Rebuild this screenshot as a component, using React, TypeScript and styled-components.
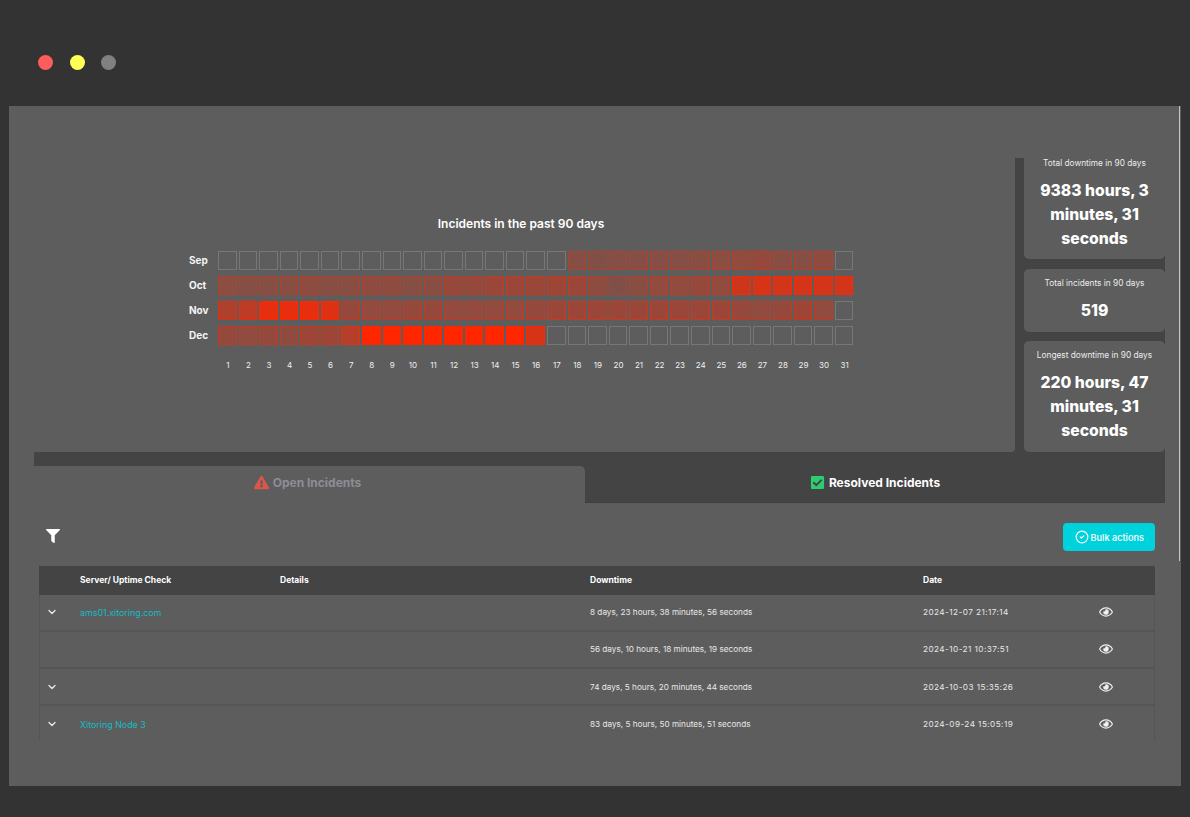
import React from 'react';
import styled, { createGlobalStyle } from 'styled-components';
import { FaCheckSquare, FaExclamationTriangle, FaFilter, FaRegEye } from 'react-icons/fa';
import { ChevronDown, CircleCheck } from 'lucide-react';

const GlobalStyle = createGlobalStyle`
  html, body {
    margin: 0;
    padding: 0;
    background: #333333;
    font-family: Inter, "Open Sans", sans-serif;
    color: #ffffff;
  }
  * { box-sizing: border-box; }
`;

const Page = styled.div`
  width: 1190px;
  height: 817px;
  overflow: hidden;
  background: #333333;
`;

const TitleBar = styled.div`
  height: 106px;
  padding: 18px 0 0 38px;
  display: flex;
  align-items: center;
  gap: 16.5px;
`;

const Dot = styled.span<{ $color: string }>`
  width: 15px;
  height: 15px;
  border-radius: 50%;
  background: ${p => p.$color};
`;

const Window = styled.div`
  position: relative;
  margin-left: 9px;
  width: 1172px;
  height: 680px;
  background: #5d5d5d;
  padding: 52px 16px 0 25px;

  &::after {
    content: '';
    position: absolute;
    top: 0;
    right: 1px;
    width: 1px;
    height: 455px;
    background: #c4c4c4;
  }
`;

const Overview = styled.section`
  display: flex;
  gap: 9px;
  height: 294px;
  background: #444444;
  overflow: hidden;
`;

const ChartPanel = styled.div`
  width: 981px;
  background: #5d5d5d;
  border-radius: 0 0 4px 0;
  padding: 57px 7px 0 0;
  display: flex;
  flex-direction: column;
  align-items: center;
`;

const ChartTitle = styled.h2`
  margin: 0 0 18px;
  font-size: 12px;
  line-height: 18px;
  font-weight: 600;
`;

const Heatmap = styled.div`
  width: 666px;
  display: grid;
  grid-template-columns: 28px repeat(31, 18.57px);
  column-gap: 2px;
  row-gap: 6px;
`;

const MonthLabel = styled.span`
  font-size: 10px;
  font-weight: 700;
  line-height: 19px;
  padding-left: 1px;
  color: #f4f4f4;
`;

const Cell = styled.span<{ $level: number }>`
  height: 19px;
  border: 1.5px solid ${p => (p.$level > 0 ? `rgba(255, 38, 0, ${Math.min(1, p.$level + 0.3)})` : '#777779')};
  background: ${p => (p.$level > 0 ? `rgba(255, 38, 0, ${p.$level})` : 'transparent')};
  background-clip: padding-box;
`;

const DayLabel = styled.span`
  margin-top: 9px;
  padding-left: 1px;
  font-size: 8px;
  line-height: 10px;
  text-align: center;
  color: #f0f0f0;
`;

const StatsColumn = styled.div`
  width: 141px;
  display: flex;
  flex-direction: column;
  gap: 9.5px;
  margin-top: -9px;
`;

const StatCard = styled.div`
  background: #5d5d5d;
  border-radius: 5px;
  padding: 8px 2px 9px;
  text-align: center;

  &:first-child {
    padding-bottom: 8px;
  }
`;

const StatLabel = styled.div`
  font-size: 8.3px;
  line-height: 13px;
  margin-bottom: 9px;
  color: #ececec;
`;

const StatValue = styled.div`
  font-size: 15.7px;
  line-height: 24px;
  font-weight: 800;
  color: #ffffff;
`;

const TabStrip = styled.div`
  height: 51px;
  padding-top: 14px;
  background: #444444;
  display: flex;
  border-bottom: 1px solid #3e3e3e;
`;

const Tab = styled.div<{ $active?: boolean; $width: number }>`
  width: ${p => p.$width}px;
  display: flex;
  align-items: center;
  justify-content: center;
  gap: 4px;
  padding: ${p => (p.$active ? '0 4px 4px 0' : '0 0 3px')};
  font-size: 12px;
  font-weight: 700;
  background: ${p => (p.$active ? '#5d5d5d' : 'transparent')};
  color: ${p => (p.$active ? '#8d8d98' : '#ffffff')};
  border-radius: 0 5px 0 0;
  margin-bottom: ${p => (p.$active ? '-1px' : '0')};
`;

const Toolbar = styled.div`
  height: 63px;
  padding: 20px 10px 0 12px;
  display: flex;
  justify-content: space-between;
  align-items: flex-start;
`;

const FilterButton = styled.span`
  display: flex;
  margin-top: 6px;
  color: #ffffff;
`;

const BulkButton = styled.button`
  width: 92px;
  height: 28px;
  border: none;
  border-radius: 4px;
  background: #00d2dc;
  color: #ffffff;
  display: flex;
  align-items: center;
  justify-content: center;
  gap: 1.5px;
  font-family: inherit;
  font-size: 9.2px;
  font-weight: 500;
  padding: 0 0 0 1px;
`;

const Table = styled.div`
  margin: 0 10px 0 5px;
  height: 175px;
  overflow: hidden;
`;

const Row = styled.div<{ $head?: boolean }>`
  height: ${p => (p.$head ? '28.5px' : '37.3px')};
  display: grid;
  grid-template-columns: 41px 200px 310px 333px 173px 1fr;
  align-items: center;
  font-size: ${p => (p.$head ? '8.5px' : '8.2px')};
  font-weight: ${p => (p.$head ? 700 : 400)};
  background: ${p => (p.$head ? '#444444' : 'transparent')};
  color: ${p => (p.$head ? '#ffffff' : '#e8e8e8')};
  border-bottom: ${p => (p.$head ? 'none' : '2px solid #555555')};
  box-shadow: ${p => (p.$head ? 'none' : 'inset 1px 0 #555555, inset -1px 0 #555555')};
`;

const Toggle = styled.span`
  display: flex;
  padding-left: 7px;
  color: #ececec;
`;

const ServerLink = styled.a`
  font-size: 8.9px;
  color: #14bcc6;
`;

const DateText = styled.span`
  letter-spacing: 0.44px;
`;

const EyeCell = styled.span`
  display: flex;
  padding-left: 3px;
  color: #f0f0f0;
`;

const months = [
  { name: 'Sep', levels: [0, 0, 0, 0, 0, 0, 0, 0, 0, 0, 0, 0, 0, 0, 0, 0, 0, .25, .22, .25, .25, .25, .25, .27, .28, .32, .35, .27, .25, .3, 0] },
  { name: 'Oct', levels: [.28, .25, .25, .27, .3, .27, .27, .3, .3, .25, .27, .35, .35, .38, .38, .38, .4, .38, .3, .22, .27, .32, .32, .35, .32, .7, .75, .72, .72, .72, .72] },
  { name: 'Nov', levels: [.5, .6, .85, .85, .85, .8, .35, .33, .33, .35, .35, .33, .33, .33, .33, .35, .38, .38, .38, .38, .38, .38, .38, .38, .38, .35, .32, .35, .4, .32, 0] },
  { name: 'Dec', levels: [.35, .32, .35, .3, .4, .4, .55, 1, 1, 1, 1, 1, 1, 1, 1, .75, 0, 0, 0, 0, 0, 0, 0, 0, 0, 0, 0, 0, 0, 0, 0] },
];

const stats = [
  { label: 'Total downtime in 90 days', value: '9383 hours, 3 minutes, 31 seconds' },
  { label: 'Total incidents in 90 days', value: '519' },
  { label: 'Longest downtime in 90 days', value: '220 hours, 47 minutes, 31 seconds' },
];

const incidents = [
  { server: 'ams01.xitoring.com', downtime: '8 days, 23 hours, 38 minutes, 56 seconds', date: '2024-12-07 21:17:14', expandable: true },
  { server: '', downtime: '56 days, 10 hours, 18 minutes, 19 seconds', date: '2024-10-21 10:37:51', expandable: false },
  { server: '', downtime: '74 days, 5 hours, 20 minutes, 44 seconds', date: '2024-10-03 15:35:26', expandable: true },
  { server: 'Xitoring Node 3', downtime: '83 days, 5 hours, 50 minutes, 51 seconds', date: '2024-09-24 15:05:19', expandable: true },
];

export default function App() {
  return (
    <Page>
      <GlobalStyle />
      <TitleBar>
        <Dot $color="#ff5c5c" />
        <Dot $color="#ffff55" />
        <Dot $color="#808080" />
      </TitleBar>
      <Window>
        <Overview>
          <ChartPanel>
            <ChartTitle>Incidents in the past 90 days</ChartTitle>
            <Heatmap>
              {months.map(month => (
                <React.Fragment key={month.name}>
                  <MonthLabel>{month.name}</MonthLabel>
                  {month.levels.map((level, i) => (
                    <Cell key={i} $level={level} />
                  ))}
                </React.Fragment>
              ))}
              <span />
              {Array.from({ length: 31 }, (_, i) => (
                <DayLabel key={i}>{i + 1}</DayLabel>
              ))}
            </Heatmap>
          </ChartPanel>
          <StatsColumn>
            {stats.map(stat => (
              <StatCard key={stat.label}>
                <StatLabel>{stat.label}</StatLabel>
                <StatValue>{stat.value}</StatValue>
              </StatCard>
            ))}
          </StatsColumn>
        </Overview>

        <TabStrip>
          <Tab $active $width={551}>
            <FaExclamationTriangle size={15} color="#d9574a" />
            Open Incidents
          </Tab>
          <Tab $width={580}>
            <FaCheckSquare size={15} color="#2ecc71" />
            Resolved Incidents
          </Tab>
        </TabStrip>

        <Toolbar>
          <FilterButton>
            <FaFilter size={14} />
          </FilterButton>
          <BulkButton>
            <CircleCheck size={14} strokeWidth={2} />
            Bulk actions
          </BulkButton>
        </Toolbar>

        <Table>
          <Row $head>
            <span />
            <span>Server/ Uptime Check</span>
            <span>Details</span>
            <span>Downtime</span>
            <span>Date</span>
            <span />
          </Row>
          {incidents.map(incident => (
            <Row key={incident.date}>
              <Toggle>{incident.expandable && <ChevronDown size={12} strokeWidth={2.5} />}</Toggle>
              <ServerLink>{incident.server}</ServerLink>
              <span />
              <span>{incident.downtime}</span>
              <DateText>{incident.date}</DateText>
              <EyeCell>
                <FaRegEye size={14} />
              </EyeCell>
            </Row>
          ))}
        </Table>
      </Window>
    </Page>
  );
}
